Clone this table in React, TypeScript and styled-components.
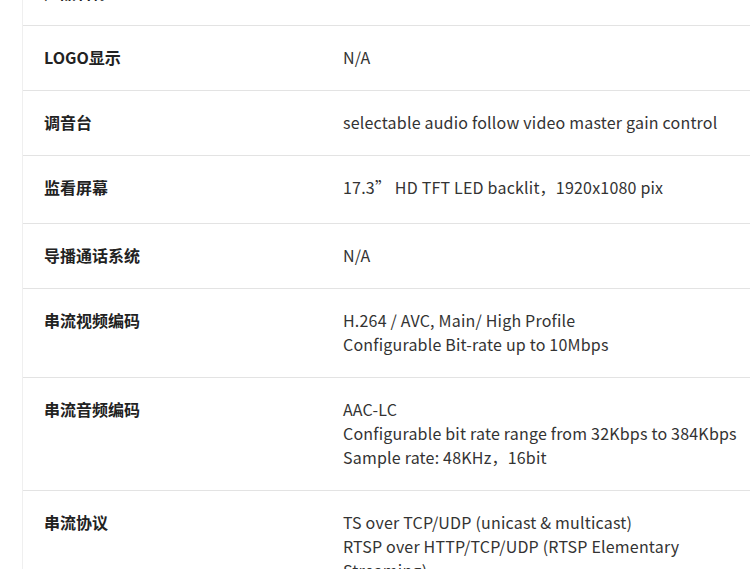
import React from 'react'
import styled, { createGlobalStyle } from 'styled-components'

const GlobalStyle = createGlobalStyle`
  html, body {
    margin: 0;
    padding: 0;
    background: #fff;
    overflow: hidden;
  }
  body {
    font-family: "Noto Sans CJK SC", "Noto Sans", sans-serif;
    color: #333;
  }
`

const Page = styled.div`
  width: 750px;
  height: 569px;
  overflow: hidden;
  padding-left: 22px;
  box-sizing: border-box;
`

const Table = styled.div`
  width: 820px;
  margin-top: -39px;
  border-left: 1px solid #efefef;
`

const Row = styled.div<{ $extra?: number }>`
  display: grid;
  grid-template-columns: 300px 1fr;
  border-bottom: 1px solid #e3e3e3;
  padding: 19px 0 ${p => 21 + (p.$extra || 0)}px;
`

const Label = styled.div`
  padding-left: 21px;
  font-size: 16px;
  line-height: 24px;
  font-weight: 700;
  color: #222;
`

const Value = styled.div`
  padding-left: 20px;
  font-size: 16px;
  line-height: 24px;
  letter-spacing: 0.2px;
  color: #333;
`

type Spec = { label: string; lines: string[]; extra?: number }

const specs: Spec[] = [
  { label: '产品名称', lines: ['HD 4K'] },
  { label: 'LOGO显示', lines: ['N/A'] },
  { label: '调音台', lines: ['selectable audio follow video master gain control'] },
  { label: '监看屏幕', lines: ['17.3”  HD TFT LED backlit，1920x1080 pix'], extra: 3 },
  { label: '导播通话系统', lines: ['N/A'] },
  { label: '串流视频编码', lines: ['H.264 / AVC, Main/ High Profile', 'Configurable Bit-rate up to 10Mbps'] },
  {
    label: '串流音频编码',
    lines: ['AAC-LC', 'Configurable bit rate range from 32Kbps to 384Kbps', 'Sample rate: 48KHz，16bit'],
  },
  {
    label: '串流协议',
    lines: ['TS over TCP/UDP (unicast & multicast)', 'RTSP over HTTP/TCP/UDP (RTSP Elementary', 'Streaming)'],
  },
]

const App = () => {
  return (
    <Page>
      <GlobalStyle />
      <Table>
        {specs.map(s => (
          <Row key={s.label} $extra={s.extra}>
            <Label>{s.label}</Label>
            <Value>
              {s.lines.map((l, i) => (
                <div key={i}>{l}</div>
              ))}
            </Value>
          </Row>
        ))}
      </Table>
    </Page>
  )
}

export default App
